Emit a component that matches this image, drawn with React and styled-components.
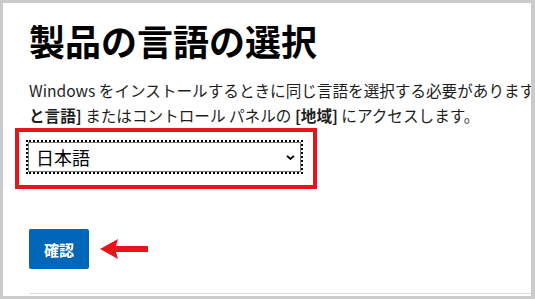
import React from "react";
import styled, { createGlobalStyle } from "styled-components";

const Global = createGlobalStyle`
  html, body { margin: 0; padding: 0; background: #fff; }
  body { font-family: "Noto Sans CJK JP", "Noto Sans", sans-serif; }
`;

const Frame = styled.div`
  box-sizing: border-box;
  width: 535px;
  height: 299px;
  overflow: hidden;
  border-style: solid;
  border-color: #cbcbcb;
  border-width: 3px 4px 3px 3px;
  background: #fff;
  display: flex;
  flex-direction: column;
`;

const Title = styled.h1`
  margin: 16px 0 0 26px;
  font-size: 36px;
  line-height: 43px;
  font-weight: 700;
  color: #000;
  white-space: nowrap;
`;

const Para = styled.div`
  margin: 16px 0 0 26px;
  font-size: 15.6px;
  line-height: 25px;
  color: #1e1e1e;
  overflow: hidden;
`;

const Line = styled.div`
  white-space: nowrap;
`;

const B = styled.b`
  font-weight: 700;
`;

const Highlight = styled.div`
  align-self: flex-start;
  margin: 0 0 0 12px;
  border: 4px solid #e6141b;
  padding: 10px 12px 13px 9px;
`;

const SelectWrap = styled.div`
  position: relative;
  width: 273px;
`;

const Select = styled.select`
  box-sizing: border-box;
  appearance: none;
  -webkit-appearance: none;
  width: 273px;
  height: 30px;
  margin: 0;
  padding: 0 20px 0 7px;
  border: 1px solid #7a7a7a;
  border-radius: 0;
  outline: 2px dotted #000;
  outline-offset: 0;
  background: #fff;
  font-family: "Noto Sans CJK JP", sans-serif;
  font-size: 18px;
  color: #000;
`;

const Chevron = styled.svg`
  position: absolute;
  right: 6px;
  top: 13px;
  pointer-events: none;
`;

const ActionRow = styled.div`
  display: flex;
  align-items: center;
  gap: 11px;
  margin: 40px 0 0 26px;
`;

const Button = styled.button`
  width: 60px;
  height: 40px;
  border: none;
  border-radius: 2px;
  background: #0067b8;
  color: #fff;
  font-family: "Noto Sans CJK JP", sans-serif;
  font-size: 15px;
  font-weight: 700;
  padding: 0;
`;

const Rule = styled.div`
  margin: 24px 0 0 26px;
  height: 1px;
  background: #dcdcdc;
`;

export default function App() {
  return (
    <>
      <Global />
      <Frame>
        <Title>製品の言語の選択</Title>
        <Para>
          <Line>
            Windows をインストールするときに同じ言語を選択する必要があります。現在使用されている言語を確認するには、PC 設定の <B>[時刻</B>
          </Line>
          <Line>
            <B>と言語]</B> またはコントロール パネルの <B>[地域]</B> にアクセスします。
          </Line>
        </Para>
        <Highlight>
          <SelectWrap>
            <Select defaultValue="ja">
              <option value="ja">日本語</option>
            </Select>
            <Chevron width="9" height="5" viewBox="0 0 9 5">
              <path d="M1 0.8 L4.5 4 L8 0.8" fill="none" stroke="#000" strokeWidth="1.8" />
            </Chevron>
          </SelectWrap>
        </Highlight>
        <ActionRow>
          <Button>確認</Button>
          <svg width="48" height="20" viewBox="0 0 48 20">
            <path d="M0 10 L18 0 L16 7 L48 7 L48 13 L16 13 L18 20 Z" fill="#e8141c" />
          </svg>
        </ActionRow>
        <Rule />
      </Frame>
    </>
  );
}
